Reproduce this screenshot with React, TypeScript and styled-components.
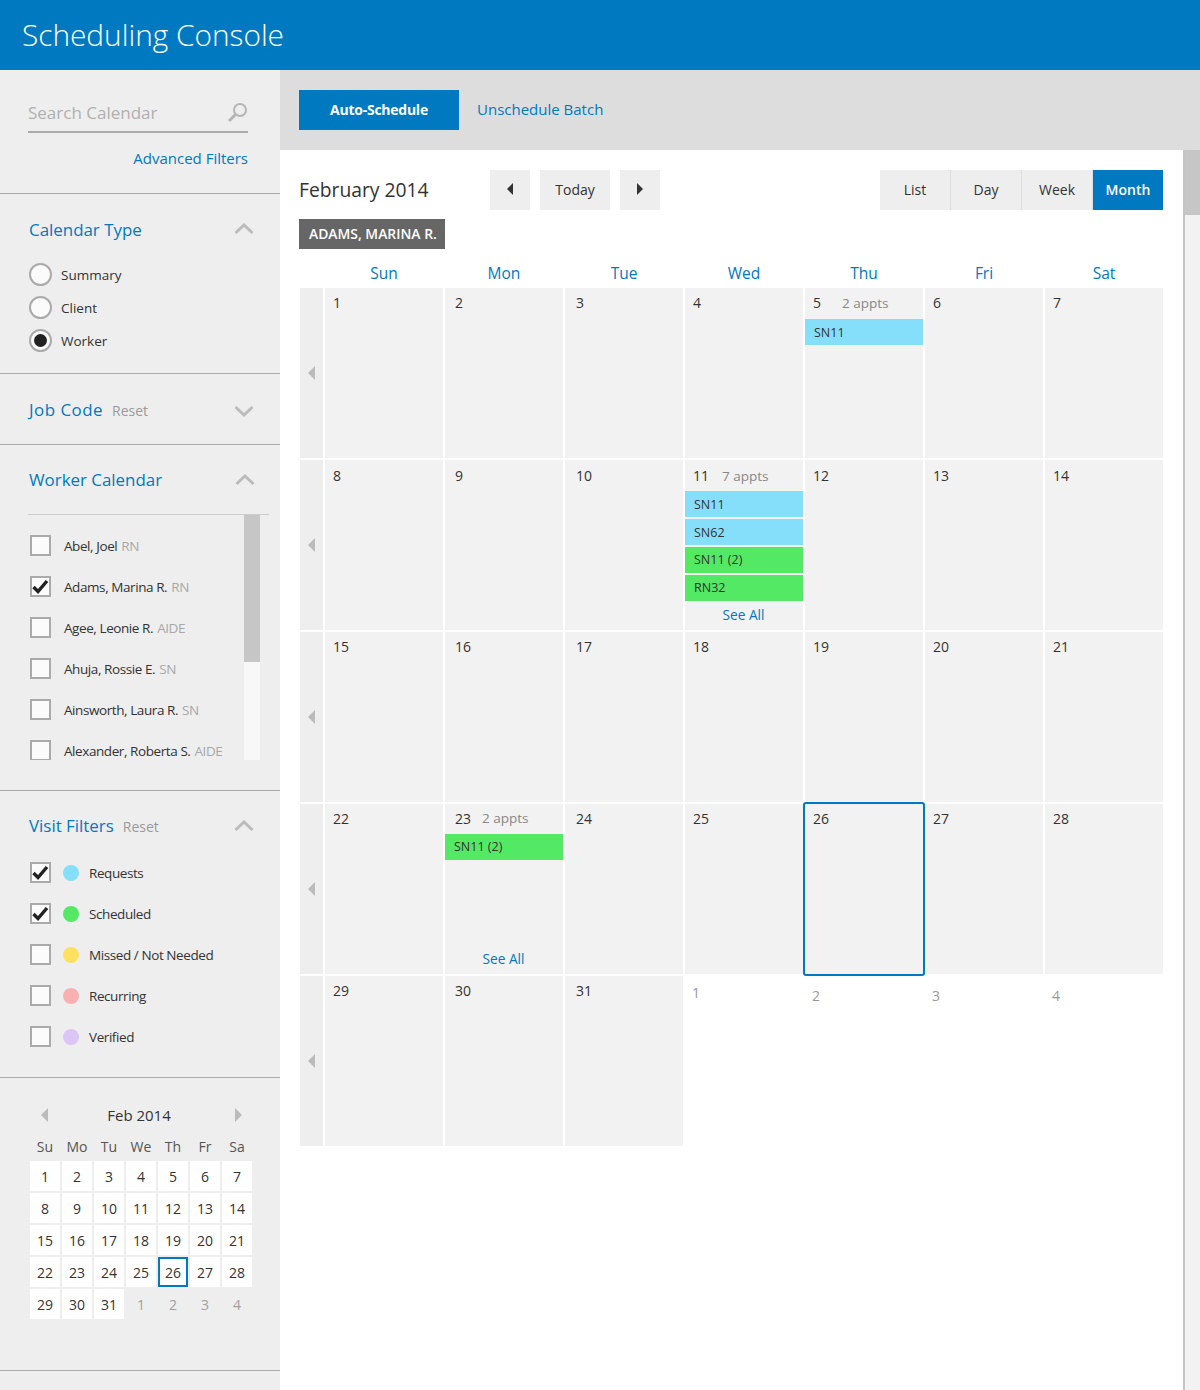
import styled, { createGlobalStyle } from "styled-components";

const BLUE = "#0079c1";

const GlobalStyle = createGlobalStyle`
  html, body { margin: 0; padding: 0; background: #fff; }
  body { font-family: "Open Sans", "Noto Sans", sans-serif; color: #333; }
  * { box-sizing: border-box; }
`;

const Page = styled.div`
  width: 1200px;
  height: 1390px;
  overflow: hidden;
  display: flex;
  flex-direction: column;
`;

const Header = styled.header`
  height: 70px;
  flex: none;
  background: ${BLUE};
  color: #fff;
  display: flex;
  align-items: center;
  padding: 0 0 2px 22px;
  font-size: 29.8px;
  font-weight: 300;
`;

const Body = styled.div`
  flex: 1;
  display: flex;
  min-height: 0;
`;

const Sidebar = styled.aside`
  width: 280px;
  flex: none;
  background: #eee;
`;

const Section = styled.section<{ $height: number }>`
  height: ${(p) => p.$height}px;
  border-bottom: 1px solid #aaa;
  display: flow-root;
`;

const SearchRow = styled.div`
  margin: 30px 0 0 28px;
  width: 220px;
  height: 33px;
  padding-bottom: 6px;
  border-bottom: 2px solid #aaa;
  display: flex;
  align-items: center;
  justify-content: space-between;
  font-size: 17px;
  color: #b0b0b0;
`;

const AdvancedLink = styled.a`
  display: block;
  width: 248px;
  text-align: right;
  color: ${BLUE};
  font-size: 15px;
  margin-top: 14px;
  line-height: 22px;
`;

const SectionHead = styled.div<{ $top: number }>`
  position: relative;
  margin-top: ${(p) => p.$top}px;
  height: 26px;
  padding-left: 29px;
  display: flex;
  align-items: baseline;
  gap: 9px;
`;

const SectionTitle = styled.h3<{ $spaced?: boolean }>`
  margin: 0;
  font-size: 16.9px;
  line-height: 26px;
  font-weight: 400;
  color: ${BLUE};
  letter-spacing: ${(p) => (p.$spaced ? "0.5px" : "0")};
`;

const ResetLink = styled.span`
  font-size: 14px;
  color: #9a9a9a;
`;

const ChevronBox = styled.svg<{ $right: number; $top: number }>`
  position: absolute;
  right: ${(p) => p.$right}px;
  top: ${(p) => p.$top}px;
`;

const RadioList = styled.div`
  margin-top: 20px;
  padding-left: 29px;
  display: flex;
  flex-direction: column;
  gap: 10px;
`;

const RadioRow = styled.label`
  height: 23px;
  display: flex;
  align-items: center;
  gap: 9px;
  font-size: 13.5px;
`;

const RadioDot = styled.span<{ $on?: boolean }>`
  width: 23px;
  height: 23px;
  border-radius: 50%;
  border: 2px solid #aaa;
  background: #fbfbfb;
  display: flex;
  align-items: center;
  justify-content: center;
  &::after {
    content: "";
    display: ${(p) => (p.$on ? "block" : "none")};
    width: 13px;
    height: 13px;
    border-radius: 50%;
    background: #222;
  }
`;

const WorkerBox = styled.div`
  position: relative;
  margin: 21px 0 0 28px;
  width: 241px;
  height: 246px;
  border-top: 1px solid #ccc;
  overflow: hidden;
`;

const ListTrack = styled.div`
  position: absolute;
  top: 0;
  left: 216px;
  width: 16px;
  height: 245px;
  background: #f8f8f8;
`;

const ListThumb = styled.div`
  height: 147px;
  background: #c6c6c6;
`;

const CheckList = styled.div<{ $top: number; $left: number }>`
  padding: ${(p) => p.$top}px 0 0 ${(p) => p.$left}px;
  display: flex;
  flex-direction: column;
  gap: 20px;
`;

const CheckRow = styled.label`
  height: 21px;
  display: flex;
  align-items: center;
  font-size: 13.5px;
  white-space: nowrap;
  letter-spacing: -0.42px;
`;

const Box = styled.span`
  width: 21px;
  height: 21px;
  flex: none;
  border: 2px solid #aaa;
  background: #fbfbfb;
  display: flex;
  align-items: center;
  justify-content: center;
  margin-right: 13px;
`;

const Role = styled.span`
  color: #a8a8a8;
  margin-left: 4px;
`;

const Dot = styled.span<{ $color: string }>`
  width: 16px;
  height: 16px;
  border-radius: 50%;
  background: ${(p) => p.$color};
  margin: 0 10px 0 -1px;
  flex: none;
`;

const MiniHead = styled.div`
  margin: 25px 0 0 41px;
  width: 201px;
  height: 24px;
  display: flex;
  align-items: center;
  justify-content: space-between;
  font-size: 15px;
`;

const MiniTitle = styled.span`
  margin-right: 5px;
`;

const Arrow = styled.span<{ $dir: "left" | "right"; $color: string; $w?: number; $h?: number }>`
  display: block;
  width: 0;
  height: 0;
  border-top: ${(p) => p.$h || 7}px solid transparent;
  border-bottom: ${(p) => p.$h || 7}px solid transparent;
  ${(p) => (p.$dir === "left" ? "border-right" : "border-left")}: ${(p) => p.$w || 7}px solid ${(p) => p.$color};
`;

const MiniGrid = styled.div`
  margin: 9px 0 0 30px;
  display: grid;
  grid-template-columns: repeat(7, 30px);
  column-gap: 2px;
  row-gap: 2px;
`;

const MiniDow = styled.div`
  height: 22px;
  text-align: center;
  font-size: 14px;
  line-height: 22px;
  color: #555;
  margin-bottom: 1px;
`;

const MiniDay = styled.div<{ $muted?: boolean; $today?: boolean }>`
  height: 30px;
  background: ${(p) => (p.$muted ? "transparent" : "#fff")};
  color: ${(p) => (p.$muted ? "#a0a0a0" : "#333")};
  border: ${(p) => (p.$today ? `2px solid ${BLUE}` : "none")};
  font-size: 14px;
  display: flex;
  align-items: center;
  justify-content: center;
`;

const Main = styled.main`
  flex: 1;
  display: flex;
  flex-direction: column;
  min-width: 0;
`;

const Toolbar = styled.div`
  height: 80px;
  flex: none;
  background: #ddd;
  display: flex;
  align-items: center;
  padding-left: 19px;
  gap: 18px;
`;

const PrimaryButton = styled.button`
  width: 160px;
  height: 40px;
  border: 0;
  padding: 0 0 2px;
  background: ${BLUE};
  color: #fff;
  font: 700 14px "Open Sans", sans-serif;
  letter-spacing: -0.25px;
`;

const TextLink = styled.a`
  color: ${BLUE};
  font-size: 15px;
  margin-bottom: 2px;
`;

const ContentRow = styled.div`
  flex: 1;
  display: flex;
  min-height: 0;
`;

const Content = styled.div`
  width: 903px;
  padding: 20px 20px 0 19px;
`;

const PageScroll = styled.div`
  width: 17px;
  border-left: 2px solid #c4c4c4;
  background: #f2f2f2;
`;

const PageThumb = styled.div`
  height: 65px;
  background: #c6c6c6;
`;

const CalBar = styled.div`
  display: flex;
  align-items: center;
  height: 40px;
`;

const MonthTitle = styled.h2`
  margin: 0 0 2px;
  width: 191px;
  font-size: 19.3px;
  font-weight: 400;
  color: #333;
`;

const NavButton = styled.button<{ $wide?: boolean }>`
  width: ${(p) => (p.$wide ? 70 : 40)}px;
  height: 40px;
  border: 0;
  margin-right: 10px;
  background: #eee;
  color: #333;
  font: 400 14px "Open Sans", sans-serif;
  display: flex;
  align-items: center;
  justify-content: center;
  padding: 0 0 2px;
`;

const ViewGroup = styled.div`
  margin-left: auto;
  display: flex;
  gap: 1px;
  background: #ddd;
`;

const ViewButton = styled.button<{ $on?: boolean }>`
  width: 70px;
  height: 40px;
  border: 0;
  padding: 0 0 2px;
  background: ${(p) => (p.$on ? BLUE : "#eee")};
  color: ${(p) => (p.$on ? "#fff" : "#333")};
  font: ${(p) => (p.$on ? 600 : 400)} 14px "Open Sans", sans-serif;
`;

const WorkerTag = styled.div`
  display: inline-block;
  margin-top: 9px;
  height: 30px;
  line-height: 30px;
  padding: 0 8px 0 10px;
  background: #666;
  color: #fff;
  font-size: 13.9px;
  font-weight: 600;
  vertical-align: top;
`;

const DowRow = styled.div`
  margin: 11px 0 0 1px;
  height: 28px;
  display: grid;
  grid-template-columns: 23px repeat(7, 118px);
  column-gap: 2px;
`;

const DowLabel = styled.div`
  text-align: center;
  color: ${BLUE};
  font-size: 15.5px;
  line-height: 26px;
`;

const MonthGrid = styled.div`
  margin-left: 1px;
  display: grid;
  grid-template-columns: 23px repeat(7, 118px);
  grid-auto-rows: 170px;
  gap: 2px;
`;

const WeekHandle = styled.div`
  background: #eee;
  display: flex;
  align-items: center;
  justify-content: center;
  padding-right: 1px;
`;

const DayCell = styled.div<{ $blank?: boolean; $today?: boolean }>`
  background: ${(p) => (p.$blank ? "transparent" : "#f2f2f2")};
  outline: ${(p) => (p.$today ? `2px solid ${BLUE}` : "none")};
  border-radius: ${(p) => (p.$today ? "1px" : "0")};
  display: flex;
  flex-direction: column;
  padding-bottom: 5px;
  ${(p) => (p.$today ? "position: relative; z-index: 1;" : "")}
`;

const DateRow = styled.div<{ $pad: string; $tight?: boolean }>`
  height: ${(p) => (p.$tight ? 30 : 31)}px;
  flex: none;
  display: grid;
  grid-template-columns: 37px 1fr;
  align-items: center;
  font-size: 14px;
  padding: ${(p) => p.$pad};
`;

const DateNum = styled.span<{ $pad: number; $muted?: boolean }>`
  padding-left: ${(p) => p.$pad}px;
  color: ${(p) => (p.$muted ? "#999" : "#333")};
`;

const Appts = styled.span`
  color: #888;
  font-size: 13.5px;
`;

const EventList = styled.div`
  display: flex;
  flex-direction: column;
  gap: 2px;
`;

const EventBar = styled.div<{ $color: string }>`
  height: 26px;
  background: ${(p) => p.$color};
  font-size: 12.5px;
  line-height: ${(p) => (p.$color === "#86dffa" ? 28 : 26)}px;
  padding-left: 9px;
`;

const SeeAll = styled.a`
  margin-top: auto;
  text-align: center;
  color: ${BLUE};
  font-size: 13.7px;
  line-height: 20px;
  padding-right: 1px;
`;

const COL_PAD = [8, 10, 11, 8, 8, 8, 8];
const DAY_BLUE = "#86dffa";
const DAY_GREEN = "#54e964";

type CalEvent = { label: string; color: string };
type DayData = {
  n: number;
  appts?: string;
  events?: CalEvent[];
  seeAll?: boolean;
  today?: boolean;
  blank?: boolean;
  tight?: boolean;
};

const dayOverrides: Record<number, Partial<DayData>> = {
  5: { appts: "2 appts", events: [{ label: "SN11", color: DAY_BLUE }] },
  11: {
    appts: "7 appts",
    seeAll: true,
    events: [
      { label: "SN11", color: DAY_BLUE },
      { label: "SN62", color: DAY_BLUE },
      { label: "SN11 (2)", color: DAY_GREEN },
      { label: "RN32", color: DAY_GREEN },
    ],
  },
  23: { appts: "2 appts", seeAll: true, tight: true, events: [{ label: "SN11 (2)", color: DAY_GREEN }] },
  26: { today: true },
};

const days: DayData[] = [
  ...Array.from({ length: 31 }, (_, i) => ({ n: i + 1, ...dayOverrides[i + 1] })),
  ...[1, 2, 3, 4].map((n) => ({ n, blank: true, tight: n === 1 })),
];
const weeks = [0, 1, 2, 3, 4].map((w) => days.slice(w * 7, w * 7 + 7));

const workers = [
  { name: "Abel, Joel", role: "RN" },
  { name: "Adams, Marina R.", role: "RN", on: true },
  { name: "Agee, Leonie R.", role: "AIDE" },
  { name: "Ahuja, Rossie E.", role: "SN" },
  { name: "Ainsworth, Laura R.", role: "SN" },
  { name: "Alexander, Roberta S.", role: "AIDE" },
];

const visits = [
  { name: "Requests", color: "#86dffa", on: true },
  { name: "Scheduled", color: "#54e964", on: true },
  { name: "Missed / Not Needed", color: "#fde15f" },
  { name: "Recurring", color: "#f9b0b0" },
  { name: "Verified", color: "#dcc6f7" },
];

function datePadding(d: DayData, week: number) {
  if (d.blank) return d.tight ? "2px 0 0" : "8px 0 0";
  return week === 1 ? "1px 0 1px" : "0 0 2px";
}

function Chevron({ up, right = 26, top = 5 }: { up?: boolean; right?: number; top?: number }) {
  return (
    <ChevronBox $right={right} $top={top} width="20" height="14" viewBox="0 0 20 14">
      <path
        d={up ? "M1.5 11 L10 3 L18.5 11" : "M1.5 3 L10 11 L18.5 3"}
        fill="none"
        stroke="#bbb"
        strokeWidth="3"
      />
    </ChevronBox>
  );
}

function CheckBox({ on }: { on?: boolean }) {
  return (
    <Box>
      {on && (
        <svg width="17" height="15" viewBox="0 0 17 15">
          <path d="M1.5 8 L6 12.5 L15 2" fill="none" stroke="#222" strokeWidth="3.4" />
        </svg>
      )}
    </Box>
  );
}

function App() {
  return (
    <Page>
      <GlobalStyle />
      <Header>Scheduling Console</Header>
      <Body>
        <Sidebar>
          <Section $height={124}>
            <SearchRow>
              Search Calendar
              <svg width="21" height="21" viewBox="0 0 21 21">
                <circle cx="13" cy="8" r="6" fill="none" stroke="#b5b5b5" strokeWidth="2" />
                <path d="M8.5 12.5 L2 19" stroke="#b5b5b5" strokeWidth="3" />
              </svg>
            </SearchRow>
            <AdvancedLink>Advanced Filters</AdvancedLink>
          </Section>

          <Section $height={180}>
            <SectionHead $top={23}>
              <SectionTitle>Calendar Type</SectionTitle>
              <Chevron up />
            </SectionHead>
            <RadioList>
              <RadioRow>
                <RadioDot />
                Summary
              </RadioRow>
              <RadioRow>
                <RadioDot />
                Client
              </RadioRow>
              <RadioRow>
                <RadioDot $on />
                Worker
              </RadioRow>
            </RadioList>
          </Section>

          <Section $height={71}>
            <SectionHead $top={23}>
              <SectionTitle $spaced>Job Code</SectionTitle>
              <ResetLink>Reset</ResetLink>
              <Chevron top={7} />
            </SectionHead>
          </Section>

          <Section $height={346}>
            <SectionHead $top={22}>
              <SectionTitle>Worker Calendar</SectionTitle>
              <Chevron up right={25} top={6} />
            </SectionHead>
            <WorkerBox>
              <CheckList $top={20} $left={2}>
                {workers.map((w) => (
                  <CheckRow key={w.name}>
                    <CheckBox on={w.on} />
                    {w.name}
                    <Role>{w.role}</Role>
                  </CheckRow>
                ))}
              </CheckList>
              <ListTrack>
                <ListThumb />
              </ListTrack>
            </WorkerBox>
          </Section>

          <Section $height={287}>
            <SectionHead $top={22}>
              <SectionTitle>Visit Filters</SectionTitle>
              <ResetLink>Reset</ResetLink>
              <Chevron up top={6} />
            </SectionHead>
            <CheckList $top={23} $left={30}>
              {visits.map((v) => (
                <CheckRow key={v.name}>
                  <CheckBox on={v.on} />
                  <Dot $color={v.color} />
                  {v.name}
                </CheckRow>
              ))}
            </CheckList>
          </Section>

          <Section $height={293}>
            <MiniHead>
              <Arrow $dir="left" $color="#bbb" />
              <MiniTitle>Feb 2014</MiniTitle>
              <Arrow $dir="right" $color="#bbb" />
            </MiniHead>
            <MiniGrid>
              {["Su", "Mo", "Tu", "We", "Th", "Fr", "Sa"].map((d) => (
                <MiniDow key={d}>{d}</MiniDow>
              ))}
              {days.map((d, i) => (
                <MiniDay key={i} $muted={d.blank} $today={d.today}>
                  {d.n}
                </MiniDay>
              ))}
            </MiniGrid>
          </Section>
        </Sidebar>

        <Main>
          <Toolbar>
            <PrimaryButton>Auto-Schedule</PrimaryButton>
            <TextLink>Unschedule Batch</TextLink>
          </Toolbar>
          <ContentRow>
            <Content>
              <CalBar>
                <MonthTitle>February 2014</MonthTitle>
                <NavButton>
                  <Arrow $dir="left" $color="#333" $w={6} $h={6} />
                </NavButton>
                <NavButton $wide>Today</NavButton>
                <NavButton>
                  <Arrow $dir="right" $color="#333" $w={6} $h={6} />
                </NavButton>
                <ViewGroup>
                  <ViewButton>List</ViewButton>
                  <ViewButton>Day</ViewButton>
                  <ViewButton>Week</ViewButton>
                  <ViewButton $on>Month</ViewButton>
                </ViewGroup>
              </CalBar>
              <WorkerTag>ADAMS, MARINA R.</WorkerTag>
              <DowRow>
                <span />
                {["Sun", "Mon", "Tue", "Wed", "Thu", "Fri", "Sat"].map((d) => (
                  <DowLabel key={d}>{d}</DowLabel>
                ))}
              </DowRow>
              <MonthGrid>
                {weeks.flatMap((week, w) => [
                  <WeekHandle key={`h${w}`}>
                    <Arrow $dir="left" $color="#bbb" />
                  </WeekHandle>,
                  ...week.map((d, c) => (
                    <DayCell key={`${w}-${c}`} $blank={d.blank} $today={d.today}>
                      <DateRow $pad={datePadding(d, w)} $tight={d.tight}>
                        <DateNum $pad={d.blank ? 7 : COL_PAD[c]} $muted={d.blank}>
                          {d.n}
                        </DateNum>
                        {d.appts && <Appts>{d.appts}</Appts>}
                      </DateRow>
                      {d.events && (
                        <EventList>
                          {d.events.map((e) => (
                            <EventBar key={e.label} $color={e.color}>
                              {e.label}
                            </EventBar>
                          ))}
                        </EventList>
                      )}
                      {d.seeAll && <SeeAll>See All</SeeAll>}
                    </DayCell>
                  )),
                ])}
              </MonthGrid>
            </Content>
            <PageScroll>
              <PageThumb />
            </PageScroll>
          </ContentRow>
        </Main>
      </Body>
    </Page>
  );
}

export default App;
